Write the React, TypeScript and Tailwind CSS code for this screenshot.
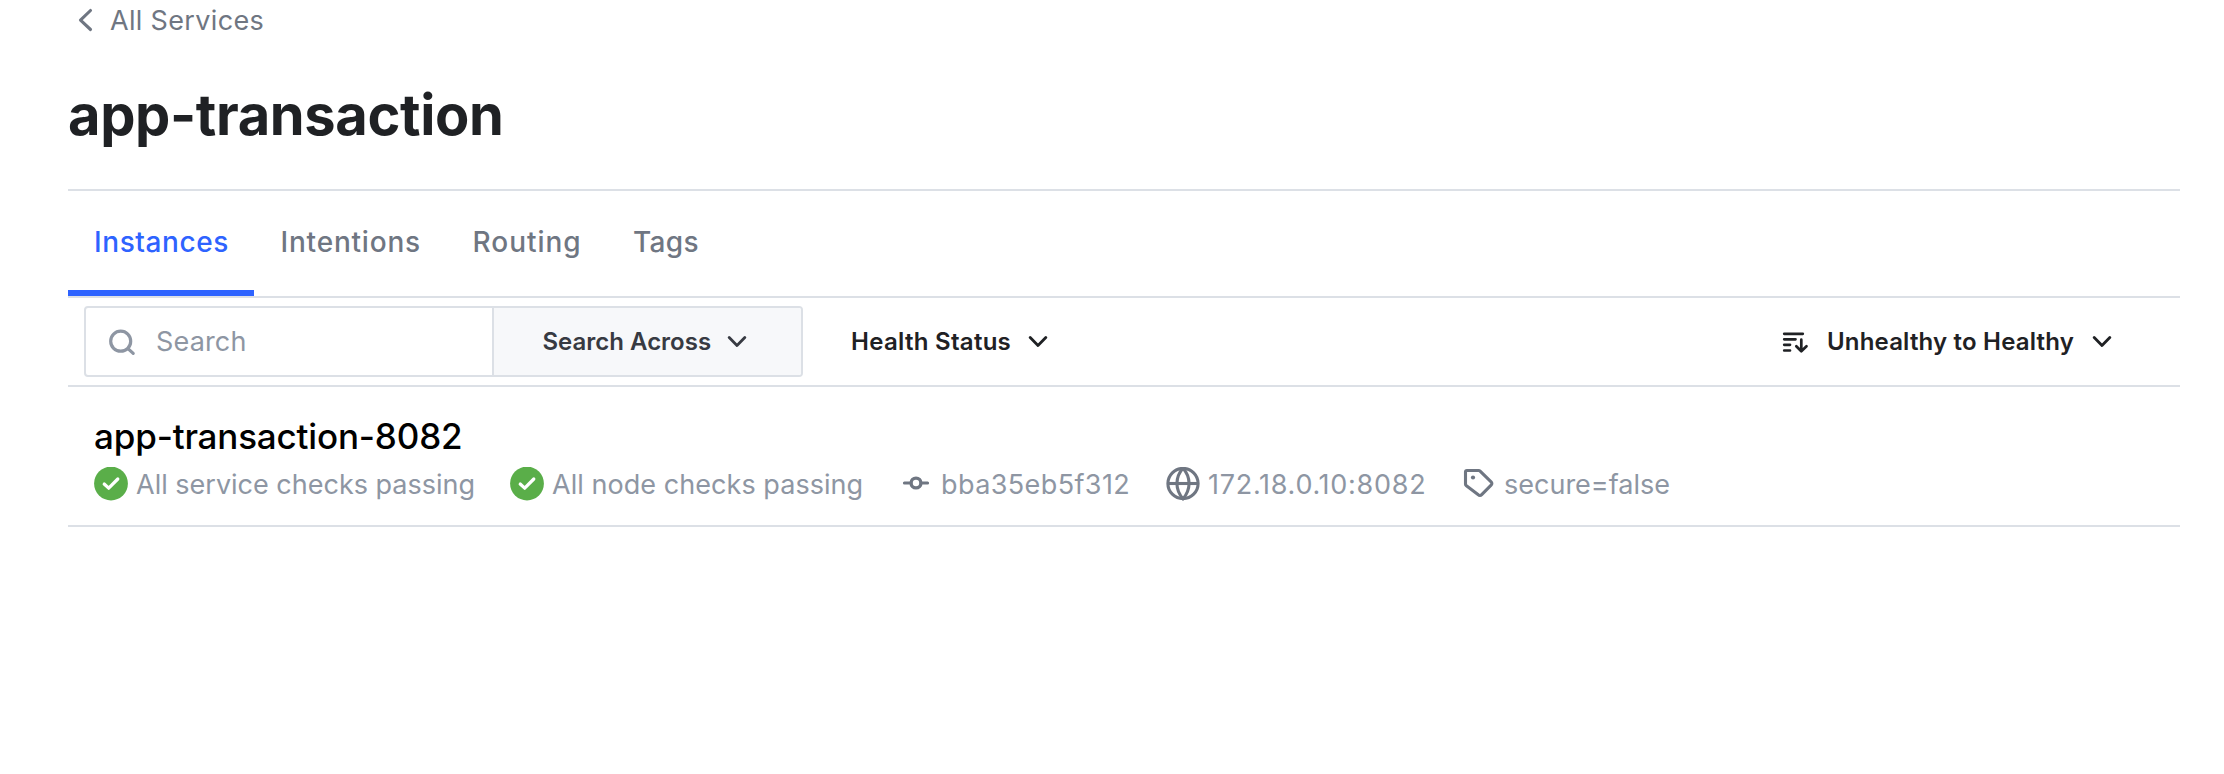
import React from 'react';

function ChevronDown({ className = '' }: { className?: string }) {
  return (
    <svg className={`h-3 w-5 shrink-0 ${className}`} viewBox="0 0 20 12" fill="none" stroke="currentColor" strokeWidth="2.8" strokeLinecap="round" strokeLinejoin="round">
      <path d="M2.2 1.6 10 9.6 17.8 1.6" />
    </svg>
  );
}

function CheckIcon() {
  return (
    <svg className="size-[34px] shrink-0" viewBox="0 0 34 34" fill="none">
      <circle cx="17" cy="16.5" r="16.9" fill="#5aae49" />
      <path d="M10.2 17 14.7 21.2 23.8 12" stroke="#fff" strokeWidth="3.2" strokeLinecap="round" strokeLinejoin="round" />
    </svg>
  );
}

function CommitIcon() {
  return (
    <svg className="size-[34px] shrink-0 text-[#6f7682]" viewBox="0 0 34 34" fill="none" stroke="currentColor" strokeLinecap="round">
      <circle cx="17" cy="16" r="4.9" strokeWidth="3.4" />
      <path d="M5.4 16H11M23 16h5.6" strokeWidth="3" />
    </svg>
  );
}

function GlobeIcon() {
  return (
    <svg className="size-[34px] shrink-0 text-[#6f7682]" viewBox="0 0 34 34" fill="none" stroke="currentColor" strokeWidth="3.1">
      <circle cx="17" cy="16.5" r="15.1" />
      <path d="M2 16.5h30" />
      <path d="M17 1.3a23.3 23.3 0 0 1 6.1 15.2A23.3 23.3 0 0 1 17 31.7a23.3 23.3 0 0 1-6.1-15.2A23.3 23.3 0 0 1 17 1.3z" />
    </svg>
  );
}

function TagIcon() {
  return (
    <svg className="size-[34px] shrink-0 text-[#6f7682]" viewBox="0 0 34 34" fill="none" stroke="currentColor" strokeWidth="3.1" strokeLinejoin="round">
      <path d="M5 3.5h11.6c.6 0 1.1.2 1.5.6l11 10.7c1 1 1 2.5 0 3.4l-9.400 9.500c-1 1-2.500 1-3.400 0L4.100 18.500c-.4-.4-.6-.9-.6-1.500V5c0-.9.6-1.500 1.500-1.500z" />
      <circle cx="11" cy="10.500" r="2.100" fill="currentColor" stroke="none" />
    </svg>
  );
}

function SearchIcon() {
  return (
    <svg className="size-7 shrink-0 text-[#8e96a3]" viewBox="0 0 28 28" fill="none" stroke="currentColor" strokeWidth="3.2" strokeLinecap="round">
      <circle cx="12.700" cy="13.200" r="10" />
      <path d="M20 20.600 25.200 25.400" />
    </svg>
  );
}

function SortIcon() {
  return (
    <svg className="h-6 w-7 shrink-0" viewBox="0 0 28 24" fill="none" stroke="currentColor" strokeWidth="2.700" strokeLinecap="round" strokeLinejoin="round">
      <path d="M3.200 3.800H21.800M3.200 9.300H14.500M3.200 14.800H9M3.200 20.500H9" />
      <path d="M20.300 9.700V21M15.300 16.200 20.300 21.300 25.500 16.200" />
    </svg>
  );
}

export default function App() {
  return (
    <main className="min-h-[774px] w-full bg-white pl-[68px] pr-[44px] font-['Inter',sans-serif] text-[27px] whitespace-nowrap">
      <a className="flex h-10 items-center text-[#6f7682] tracking-[0.33px]">
        <svg className="ml-[10px] h-6 w-4" viewBox="0 0 16 24" fill="none" stroke="currentColor" strokeWidth="3.100" strokeLinecap="round" strokeLinejoin="round">
          <path d="M12.500 2.500 2.500 12.200 12.500 21.500" />
        </svg>
        <span className="ml-4 pt-0.5">All Services</span>
      </a>

      <header className="flex h-[149px] items-center">
        <h1 className="text-[56px] font-bold tracking-[-0.36px] text-[#1f2124]">app-transaction</h1>
      </header>

      <nav className="flex h-[109px] border-y-2 border-[#dce0e6] text-[28px] font-medium text-[#6f7682]">
        <a className="flex w-[186px] items-center border-b-[6px] border-[#2e63ff] pt-0.5 pl-[26px] tracking-[0.6px] text-[#2e63ff]">Instances</a>
        <a className="flex w-[192px] items-center border-b-[6px] border-transparent pt-0.5 pl-[26.5px] tracking-[0.8px]">Intentions</a>
        <a className="flex w-[161px] items-center border-b-[6px] border-transparent pt-0.5 pl-[26.5px] tracking-[0.98px]">Routing</a>
        <a className="flex items-center border-b-[6px] border-transparent pt-0.5 pl-[26px] tracking-[0.34px]">Tags</a>
      </nav>

      <section className="flex h-[89px] items-start border-b-2 border-[#dce0e6] pt-2 pl-4 text-[24px] font-semibold text-[#1f2124]">
        <div className="flex h-[71px] w-[719px] overflow-hidden rounded-[4px] border-2 border-[#dce0e6]">
          <div className="flex w-[408px] items-center border-r-2 border-[#dce0e6] pl-[22px] text-[27px] font-normal tracking-[0.16px] text-[#8e96a3]">
            <SearchIcon />
            <span className="ml-5 pt-0.5">Search</span>
          </div>
          <button className="flex flex-1 items-center bg-[#f7f8fa] pl-[48.5px] text-[#373a42]">
            <span>Search Across</span>
            <ChevronDown className="ml-4" />
          </button>
        </div>
        <button className="ml-[48px] flex h-[71px] items-center tracking-[0.29px]">
          <span>Health Status</span>
          <ChevronDown className="ml-[17px]" />
        </button>
        <button className="mr-[68px] ml-auto flex h-[71px] items-center tracking-[0.18px]">
          <SortIcon />
          <span className="ml-[18px]">Unhealthy to Healthy</span>
          <ChevronDown className="ml-[18px]" />
        </button>
      </section>

      <article className="h-[140px] border-b-2 border-[#dce0e6] pt-[27px] pl-[26px]">
        <h2 className="text-[35px] leading-[44px] font-medium tracking-[-0.17px] text-black">app-transaction-8082</h2>
        <ul className="mt-[9px] flex h-[34px] items-center text-[#8e96a3]">
          <li className="flex w-[416px] items-center gap-2"><CheckIcon /><span className="pt-0.5">All service checks passing</span></li>
          <li className="flex w-[389px] items-center gap-2 tracking-[0.05px]"><CheckIcon /><span className="pt-0.5">All node checks passing</span></li>
          <li className="flex w-[267px] items-center gap-2 tracking-[0.4px]"><CommitIcon /><span className="pt-0.5">bba35eb5f312</span></li>
          <li className="flex w-[296px] items-center gap-2 tracking-[0.72px]"><GlobeIcon /><span className="pt-0.5">172.18.0.10:8082</span></li>
          <li className="flex items-center gap-2"><TagIcon /><span className="pt-0.5">secure=false</span></li>
        </ul>
      </article>
    </main>
  );
}
